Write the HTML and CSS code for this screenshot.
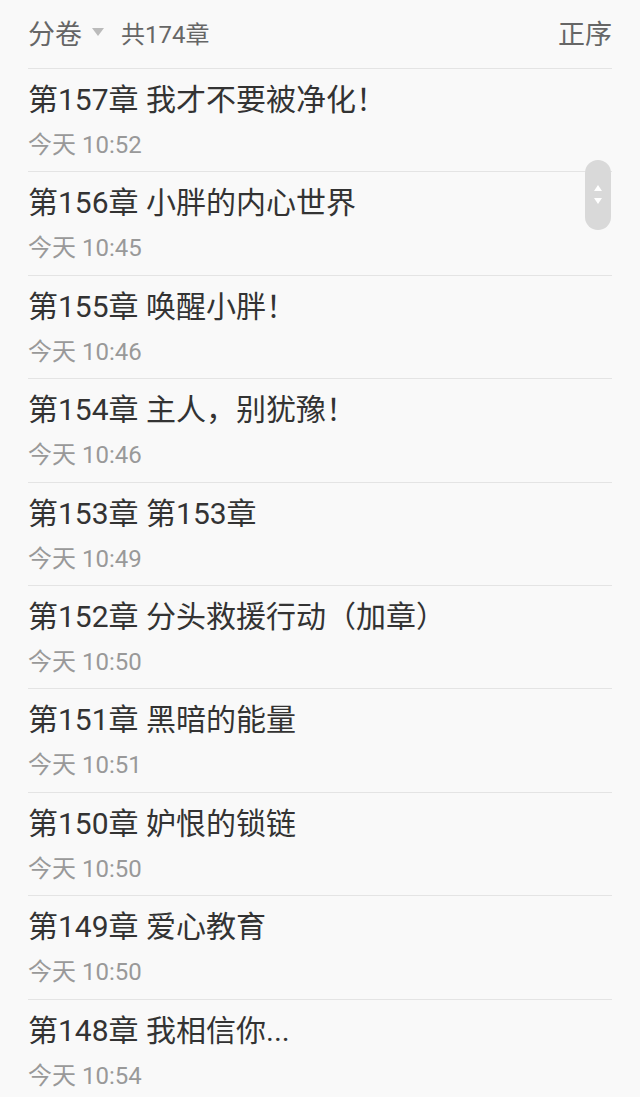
FILE: index.html
```html
<!DOCTYPE html>
<html lang="zh-CN">
<head>
<meta charset="utf-8">
<title>目录</title>
<link rel="stylesheet" href="styles.css">
</head>
<body>
<div class="page">
  <header class="bar">
    <div class="bar-left">
      <span class="vol">分卷</span>
      <span class="tri"></span>
      <span class="count">共174章</span>
    </div>
    <span class="order">正序</span>
  </header>
  <ul class="list">
    <li class="row"><div class="title">第157章 我才不要被净化！</div><div class="time">今天 10:52</div></li>
    <li class="row"><div class="title">第156章 小胖的内心世界</div><div class="time">今天 10:45</div></li>
    <li class="row"><div class="title">第155章 唤醒小胖！</div><div class="time">今天 10:46</div></li>
    <li class="row"><div class="title">第154章 主人，别犹豫！</div><div class="time">今天 10:46</div></li>
    <li class="row"><div class="title">第153章 第153章</div><div class="time">今天 10:49</div></li>
    <li class="row"><div class="title">第152章 分头救援行动（加章）</div><div class="time">今天 10:50</div></li>
    <li class="row"><div class="title">第151章 黑暗的能量</div><div class="time">今天 10:51</div></li>
    <li class="row"><div class="title">第150章 妒恨的锁链</div><div class="time">今天 10:50</div></li>
    <li class="row"><div class="title">第149章 爱心教育</div><div class="time">今天 10:50</div></li>
    <li class="row"><div class="title">第148章 我相信你...</div><div class="time">今天 10:54</div></li>
  </ul>
  <div class="thumb">
    <svg width="10" height="22" viewBox="0 0 10 22"><path d="M5 1 L9 7 L1 7 Z" fill="#fff"/><path d="M1 14 L9 14 L5 20 Z" fill="#fff"/></svg>
  </div>
</div>
</body>
</html>
```
FILE: styles.css
```css
html, body {
  margin: 0;
  padding: 0;
  background: #f9f9f9;
}
body {
  font-family: Roboto, "Noto Sans CJK SC", sans-serif;
  width: 640px;
  height: 1097px;
  overflow: hidden;
}
.page {
  position: relative;
  padding: 0 28px;
}
.bar {
  display: flex;
  align-items: center;
  justify-content: space-between;
  border-bottom: 1px solid #e4e4e4;
  padding-bottom: 4px;
  box-sizing: border-box;
  height: 69px;
}
.bar-left {
  display: flex;
  align-items: center;
}
.vol {
  font-size: 27px;
  color: #666;
}
.tri {
  width: 0;
  height: 0;
  border-left: 6px solid transparent;
  border-right: 6px solid transparent;
  border-top: 8px solid #bbb;
  margin: 0 17px 0 10px;
}
.count {
  font-size: 24px;
  color: #666;
}
.order {
  font-size: 27px;
  color: #666;
}
.list {
  list-style: none;
  margin: 0;
  padding: 0;
}
.row {
  box-sizing: border-box;
  height: 103.4px;
  border-bottom: 1px solid #e4e4e4;
  padding-top: 15px;
}
.title {
  font-size: 30px;
  line-height: 32px;
  color: #333;
  white-space: nowrap;
}
.time {
  font-size: 24px;
  line-height: 26px;
  color: #999;
  margin-top: 16px;
}
.thumb {
  position: absolute;
  top: 160px;
  right: 29px;
  width: 26px;
  height: 70px;
  border-radius: 13px;
  background: #d9d9d9;
  display: flex;
  align-items: center;
  justify-content: center;
}
```
